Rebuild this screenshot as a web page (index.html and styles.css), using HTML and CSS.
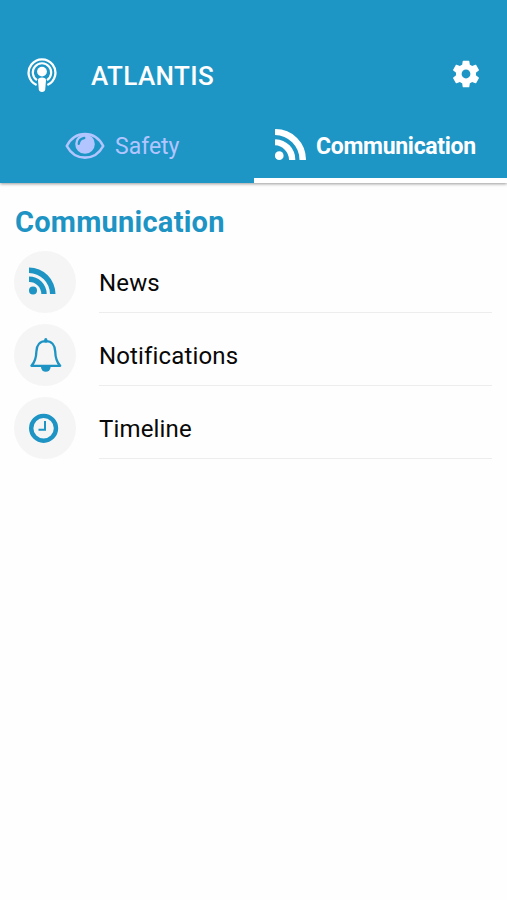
FILE: index.html
```html
<!DOCTYPE html>
<html lang="en">
<head>
    <meta charset="UTF-8">
    <meta name="viewport" content="width=device-width, initial-scale=1.0">
    <title>ATLANTIS</title>
    <link rel="stylesheet" href="styles.css">
</head>
<body>
    <header class="header">
        <div class="toolbar">
            <svg class="logo" width="30" height="35" viewBox="0 0 30 35" fill="none" stroke="#fff">
                <path d="M9.6 27A13.4 13.4 0 1 1 20.4 27" stroke-width="2.3"/>
                <path d="M10 22.2A9.2 9.2 0 1 1 20 22.2" stroke-width="2.1"/>
                <circle cx="15" cy="13.6" r="4.9" fill="#fff" stroke="none"/>
                <path d="M11 22.2q0-2.7 4-2.7t4 2.7l-.8 9.3q-.3 2.4-3.2 2.4t-3.2-2.4z" fill="#fff" stroke="none"/>
            </svg>
            <h1 class="app-title">ATLANTIS</h1>
            <svg class="settings" width="32" height="32" viewBox="0 0 24 24" fill="#fff">
                <path d="M19.43 12.98c.04-.32.07-.64.07-.98s-.03-.66-.07-.98l2.11-1.65c.19-.15.24-.42.12-.64l-2-3.46c-.12-.22-.39-.3-.61-.22l-2.49 1c-.52-.4-1.08-.73-1.69-.98l-.38-2.65C14.46 2.18 14.25 2 14 2h-4c-.25 0-.46.18-.49.42l-.38 2.65c-.61.25-1.17.59-1.69.98l-2.49-1c-.23-.09-.49 0-.61.22l-2 3.46c-.13.22-.07.49.12.64l2.11 1.65c-.04.32-.07.65-.07.98s.03.66.07.98l-2.11 1.65c-.19.15-.24.42-.12.64l2 3.46c.12.22.39.3.61.22l2.49-1c.52.4 1.08.73 1.69.98l.38 2.65c.03.24.24.42.49.42h4c.25 0 .46-.18.49-.42l.38-2.65c.61-.25 1.17-.59 1.69-.98l2.49 1c.23.09.49 0 .61-.22l2-3.46c.12-.22.07-.49-.12-.64l-2.11-1.65zM12 15.3c-1.82 0-3.3-1.48-3.3-3.3s1.48-3.3 3.3-3.3 3.3 1.48 3.3 3.3-1.48 3.3-3.3 3.3z"/>
            </svg>
        </div>
        <nav class="tabs">
            <a class="tab">
                <svg class="tab-eye" width="40" height="28" viewBox="0 0 40 28">
                    <path d="M1.8 14C10-2 30-2 38.2 14 30 29.5 10 29.5 1.8 14z" fill="none" stroke="#b3c5ff" stroke-width="2.6" stroke-linejoin="round"/>
                    <circle cx="20" cy="12" r="9.8" fill="#b3c5ff"/>
                    <path d="M13.8 11.8q.2-4.8 5.4-5.8" fill="none" stroke="#1d96c6" stroke-width="2.4" stroke-linecap="round"/>
                </svg>
                <span>Safety</span>
            </a>
            <a class="tab active">
                <svg class="tab-rss" width="31" height="31" viewBox="0 0 27 27">
                    <circle cx="3.7" cy="23.2" r="3.8"/>
                    <path d="M.5 9Q0 9 0 9.5v4.7A12.8 12.8 0 0 1 12.2 26.5q0 .5.5.5h4.5q.5 0 .5-.5A17.5 17.5 0 0 0 .5 9zM.5 0Q0 0 0 .5v4.7A21.6 21.6 0 0 1 21.3 26.5q0 .5.5.5h4.7q.5 0 .5-.5A26.5 26.5 0 0 0 .5 0z"/>
                </svg>
                <span>Communication</span>
            </a>
        </nav>
    </header>

    <main class="content">
        <h2>Communication</h2>
        <ul class="menu">
            <li>
                <svg class="icon" width="62" height="62" viewBox="0 0 62 62" fill="#1d94c4">
                    <circle cx="19" cy="39.4" r="4"/>
                    <path d="M15 25.6V31A12 12 0 0 1 27.3 43h5.4A17.5 17.5 0 0 0 15 25.6zM15 16.6v5.5A21 21 0 0 1 36 43h5.5A26.5 26.5 0 0 0 15 16.6z"/>
                </svg>
                <span class="label">News</span>
            </li>
            <li>
                <svg class="icon" width="62" height="62" viewBox="0 0 62 62" fill="none" stroke="#1d94c4">
                    <path d="M31.8 17.2c-6 0-9.2 4.3-9.4 10.2-.2 7-1.3 10.7-5 14.4h28.8c-3.7-3.7-4.8-7.4-5-14.4-.2-5.9-3.4-10.2-9.4-10.2z" stroke-width="2.3" stroke-linejoin="round"/>
                    <path d="M31.8 15.7v1.5" stroke-width="3.2" stroke-linecap="round"/>
                    <path d="M27 43a4.8 4.8 0 0 0 9.6 0z" fill="#1d94c4" stroke="none"/>
                </svg>
                <span class="label">Notifications</span>
            </li>
            <li>
                <svg class="icon" width="62" height="62" viewBox="0 0 62 62" fill="none" stroke="#1d94c4">
                    <circle cx="29.6" cy="31.3" r="12.4" stroke-width="4.4"/>
                    <path d="M31 24v8.7h-6.5" stroke-width="2"/>
                </svg>
                <span class="label">Timeline</span>
            </li>
        </ul>
    </main>
</body>
</html>
```
FILE: styles.css
```css
* {
    box-sizing: border-box;
}
body {
    margin: 0;
    min-height: 100vh;
    font-family: Roboto, sans-serif;
    background: #fefefe;
    color: #080808;
}
svg {
    display: block;
    flex: none;
}
.header {
    height: 183px;
    padding-top: 40px;
    background: #1d96c6;
    color: white;
    box-shadow: 0 1px 3px rgba(0, 0, 0, 0.4);
}
.toolbar {
    display: flex;
    align-items: center;
    height: 70px;
    padding: 0 25px 0 27px;
}
.app-title {
    flex: 1;
    margin: 2px 0 0 34px;
    font-size: 26px;
    font-weight: 500;
    line-height: 32px;
    letter-spacing: 0.4px;
}
.settings {
    margin-top: -2px;
}
.tabs {
    display: grid;
    grid-template-columns: 254px 1fr;
    height: 73px;
}
.tab {
    display: flex;
    align-items: center;
    gap: 10px;
    padding-left: 65px;
    border-bottom: 5px solid transparent;
    color: #b3c5ff;
    font-size: 23px;
    line-height: 30px;
}
.tab.active {
    padding-left: 21px;
    border-color: white;
    color: white;
    font-weight: bold;
    letter-spacing: -0.3px;
}
.tab span {
    margin-top: 6px;
}
.tab-eye {
    margin-top: 4px;
}
.tab-rss {
    fill: white;
}
.content {
    padding: 21px 15px;
}
h2 {
    margin: 0 0 11px;
    color: #1d94c4;
    font-size: 29px;
    font-weight: bold;
    line-height: 36px;
    letter-spacing: 0.25px;
}
.menu {
    list-style: none;
    margin: 0 0 0 -1px;
    padding: 0;
}
.menu li {
    display: flex;
    gap: 23px;
    height: 62px;
    margin-bottom: 11px;
}
.icon {
    border-radius: 50%;
    background: #f5f5f5;
}
.label {
    flex: 1;
    padding-top: 1px;
    border-bottom: 1px solid #ededed;
    font-size: 24px;
    line-height: 63px;
    letter-spacing: 0.15px;
}
```
